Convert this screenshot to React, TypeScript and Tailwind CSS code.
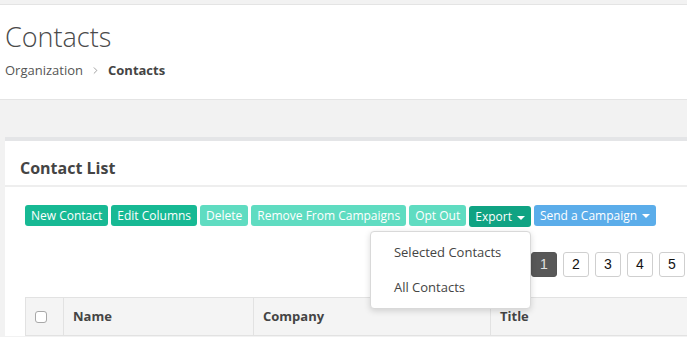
import { ChevronRight } from 'lucide-react'

const actions = [
  { label: 'New Contact', tone: 'bg-[#17b994]' },
  { label: 'Edit Columns', tone: 'bg-[#17b994]' },
  { label: 'Delete', tone: 'bg-[#5fdcc1]' },
  { label: 'Remove From Campaigns', tone: 'bg-[#5fdcc1]' },
  { label: 'Opt Out', tone: 'bg-[#5fdcc1]' },
]

function Caret() {
  return <span className="ml-[5px] inline-block h-0 w-0 border-x-[4px] border-t-[4px] border-x-transparent border-t-white align-middle" />
}

export default function App() {
  return (
    <div className="h-[337px] w-[687px] overflow-hidden bg-[#f2f2f2] pt-[4px] font-['Open_Sans',sans-serif] text-[#444]">
      {/* Page header */}
      <div className="h-[96px] border-y border-[#e4e4e4] bg-white px-[5px] pt-[14px]">
        <h1 className="text-[27px] font-light leading-[36px] text-[#4a4a4a]">Contacts</h1>
        <div className="mt-[6px] flex items-center text-[13px] leading-[18px] text-[#555]">
          <span>Organization</span>
          <ChevronRight size={11} strokeWidth={1.5} className="mx-[7px] text-[#777]" />
          <span className="font-bold text-[#444]">Contacts</span>
        </div>
      </div>

      {/* Card */}
      <div className="ml-[5px] mt-[37px] w-[900px] border-t-[4px] border-[#e4e5e7] bg-white">
        <div className="flex h-[46px] items-center border-b-2 border-[#eeeeee] px-[15px] pt-[9px]">
          <h2 className="text-[16px] font-bold text-[#444]">Contact List</h2>
        </div>

        <div className="px-[20px] pt-[16px]">
          <div className="flex items-center gap-[3px]">
            {actions.map((a) => (
              <button
                key={a.label}
                className={`h-[21px] rounded-[3px] px-[6px] text-[12px] leading-[21px] text-white ${a.tone}`}
              >
                {a.label}
              </button>
            ))}
            <div className="relative">
              <button className="h-[21px] rounded-[3px] bg-[#10a383] px-[6px] text-[12px] leading-[21px] text-white">
                Export
                <Caret />
              </button>
              <div className="absolute right-0 top-[28px] z-10 w-[161px] rounded-[4px] border border-[#d9d9d9] bg-white py-[3px] shadow-[0_2px_6px_rgba(0,0,0,0.15)]">
                <div className="flex h-[35px] items-center px-[23px] text-[13px] text-[#444]">Selected Contacts</div>
                <div className="flex h-[35px] items-center px-[23px] text-[13px] text-[#444]">All Contacts</div>
              </div>
            </div>
            <button className="h-[21px] rounded-[3px] bg-[#5badea] px-[6px] text-[12px] leading-[21px] text-white">
              Send a Campaign
              <Caret />
            </button>
          </div>

          {/* Pagination */}
          <div className="ml-[506px] mt-[25px] flex gap-[6px] font-['Liberation_Sans',sans-serif] text-[14px]">
            <span className="flex h-[25px] w-[26px] items-center justify-center rounded-[3px] border border-[#555] bg-[#585858] text-[#e0e0e0]">1</span>
            {['2', '3', '4', '5'].map((n) => (
              <span key={n} className="flex h-[25px] w-[26px] items-center justify-center rounded-[3px] border border-[#cfcfcf] bg-white text-[#111]">
                {n}
              </span>
            ))}
          </div>

          {/* Table */}
          <table className="mt-[20px] w-[860px] border-collapse text-left text-[13px]">
            <thead>
              <tr className="h-[38px] bg-[#f4f4f4]">
                <th className="w-[38px] border border-[#e2e2e2] pl-[9px]">
                  <span className="block h-[12px] w-[12px] rounded-[3px] border border-[#a8a8a8] bg-white" />
                </th>
                <th className="w-[190px] border border-[#e2e2e2] pl-[9px] font-bold text-[#444]">Name</th>
                <th className="w-[237px] border border-[#e2e2e2] pl-[9px] font-bold text-[#444]">Company</th>
                <th className="border border-[#e2e2e2] pl-[9px] font-bold text-[#444]">Title</th>
              </tr>
            </thead>
          </table>
        </div>
      </div>
    </div>
  )
}
